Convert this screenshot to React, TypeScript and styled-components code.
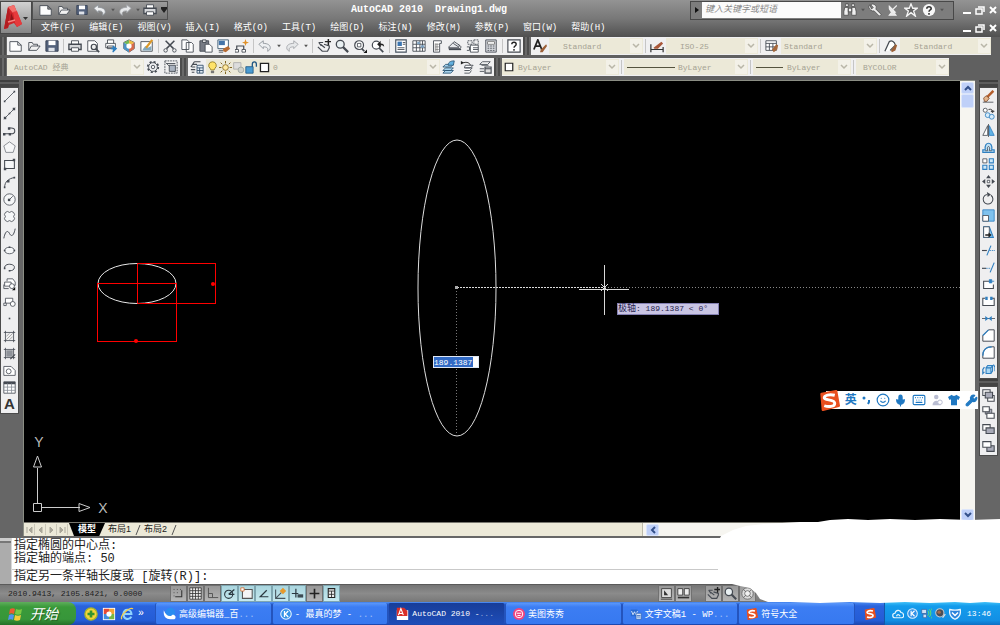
import React from 'react';
import styled, { createGlobalStyle } from 'styled-components';
import { Wrench, Mic, Keyboard, Smile } from 'lucide-react';

const mono = `"Liberation Mono", "Noto Sans CJK SC", monospace`;
const sans = `"Liberation Sans", "Noto Sans CJK SC", sans-serif`;

const Global = createGlobalStyle`
  * { box-sizing: border-box; }
  body { margin: 0; background: #666; font-family: ${mono}; font-size: 9px; }
  button, input, select { font: inherit; color: inherit; border: 0; margin: 0; padding: 0; background: none; border-radius: 0; outline: 0; }
  svg { display: block; flex: none; }
`;

/* ---------- icons ---------- */

const D = '#454a52';
const B = '#2f7fc0';

const icons: Record<string, React.ReactNode> = {
  file: <path d="M1 3h9l4 4v7H1z M10 3v4h4" fill="#fdfdfd" stroke={D} />,
  open: <path d="M2 13V4h4l1 2h5v2 M2 13l3-5h10l-4 5z" fill="#f2f2f2" stroke={D} />,
  save: <><path d="M1 2h14v12H1z" fill="#54627c" stroke="#333d50" /><path d="M4 2h8v5H4z" fill="#fff" /><path d="M4 10h7v4H4z" fill="#dfe3ea" /></>,
  print: <><path d="M4 6V2h8v4" fill="#fff" stroke={D} /><path d="M1 6h14v6H1z" fill="#d5d7da" stroke={D} strokeWidth="1.5" /><path d="M4 10h8v4H4z" fill="#fff" stroke={D} /></>,
  preview: <><path d="M2 2h8l3 3v9H2z" fill="#fff" stroke={D} /><circle cx="9" cy="9" r="3" fill="#eee" stroke={D} strokeWidth="1.4" /><path d="M11 11l4 4" stroke={D} strokeWidth="2" /></>,
  publish: <><path d="M4 5V1h7v4M2 5h11v5H2zM4 8h7v3H4z" fill="#fff" stroke={D} /><path d="M8 11h5M10 8l4 3-4 4" fill={B} stroke={B} strokeWidth="1.5" /></>,
  dwf: <><path d="M8 1l6 3v7l-6 4-6-4V4z" fill="#fff" stroke={D} /><path d="M8 1L2 4l6 4z" fill="#73b955" /><path d="M8 1l6 3-6 4z" fill="#eebc45" /><path d="M2 4l6 4v7l-6-4z" fill="#4b93c7" /><path d="M14 4L8 8v7l6-4z" fill="#d66a4d" /><circle cx="8" cy="8" r="3" fill="#fff" /></>,
  markup: <><path d="M1 3h13v11H1z" fill="#fff" stroke={D} /><path d="M3 12l3-4 3 2 4-2v5H3z" fill="#84a9bd" /><path d="M7 10l7-9" stroke="#db9829" strokeWidth="2.5" /></>,
  cut: <><path d="M3 2l9 9M13 2l-9 9" stroke={D} strokeWidth="1.7" /><circle cx="3" cy="13" r="2" stroke={D} fill="none" /><circle cx="13" cy="13" r="2" stroke={D} fill="none" /></>,
  copy: <path d="M1 1h6l2 2v9H1z M6 4h6l2 2v9H6z" fill="#fff" stroke={D} />,
  paste: <><path d="M1 2h10v12H1z" fill="#777b84" stroke={D} /><path d="M4 1h4v3H4z" fill="#ddd" stroke={D} /><path d="M7 6h5l3 3v6H7z" fill="#fff" stroke={D} /></>,
  match: <><path d="M1 1h12v10H1z" fill="#fff" stroke="#36566e" /><path d="M2 2h7v5H2z" fill="#4474a8" /><path d="M2 13h5M2 15h5" stroke={D} /><path d="M7 11l6-3 2 3-5 4-3-1z" fill="#b66a32" /></>,
  block: <><path d="M2 13V8h8v4" fill="none" stroke={D} strokeWidth="1.4" /><path d="M0 12h4v3H0zM8 12h4v3H8z" fill="#fff" stroke={D} /><path d="M12 0l1 3 3 1-3 1-1 3-1-3-3-1 3-1z" fill="#e0912a" /></>,
  undo: <path d="M1 6l5-4v3c5 0 8 2 8 5 0 2-1 3-3 4 1-4-1-5-5-5v2z" fill="#eef0f2" stroke="#8d9299" />,
  redo: <path d="M15 6l-5-4v3c-5 0-8 2-8 5 0 2 1 3 3 4-1-4 1-5 5-5v2z" fill="#e6e8ea" stroke="#a2a5a9" />,
  pan: <><path d="M2 4h5M2 4l3 4M1 9l5 5h6l2-4V8L8 6M4 6l5 4" fill="none" stroke={D} strokeWidth="1.4" /><path d="M13 0v7M9 3h7" stroke="#222" strokeWidth="1.7" /></>,
  zoom: <><circle cx="6" cy="6" r="4.500" fill="#e9f0f2" stroke={D} strokeWidth="1.5" /><path d="M9 9l6 6" stroke={D} strokeWidth="2.500" /></>,
  zoomwin: <><circle cx="7" cy="7" r="5" fill="#fff" stroke={D} strokeWidth="1.4" /><path d="M5 5h4v4H5z" fill="none" stroke={D} /><path d="M10 11l3 3" stroke={D} strokeWidth="2" /><path d="M16 12v4h-4z" fill="#111" /></>,
  zoomprev: <><circle cx="6" cy="7" r="4.500" fill="#fff" stroke={D} strokeWidth="1.4" /><path d="M9 10l5 5" stroke={D} strokeWidth="2" /><path d="M7 6l4-4v3c3 0 4 1 4 4-1-2-2-2-4-2v3z" fill="#222" /></>,
  props: <><path d="M2 1h12v14H2z" fill="#fff" stroke="#46525f" strokeWidth="1.3" /><path d="M4 3h5v5H4z" fill="#3c75b0" /><path d="M10 4h3M10 6h3M4 10h8M4 12h8" stroke={D} /></>,
  center: <><path d="M1 2h14v12H1z" fill="#fff" stroke={D} /><path d="M5 2v12M1 6h14M1 10h14M9 2v12M12 2v12" stroke={D} /><path d="M6 3h3v3H6zM10 7h4v3h-4z" fill="#7fa3c2" /></>,
  palette: <><path d="M4 2h9v3h-2v10H4z" fill="#fff" stroke={D} /><path d="M6 5v9M6 6h4M6 9h4M6 12h4M8 5v9" stroke="#888" /></>,
  sheet: <><path d="M1 9l6-6 6 4-1 3H2z" fill="#e7e9ec" stroke={D} /><path d="M1 9v2h13l1-2-3-3M6 5l6 4" fill="none" stroke={D} /><path d="M1 12h14" stroke={D} strokeWidth="1.5" /></>,
  markset: <><path d="M2 2h5v4H2zM9 1h5v5H9z" fill="none" stroke={D} strokeDasharray="2 1" /><path d="M5 7h9v8H5zM8 10h6M8 12h6" fill="#fff" stroke={D} /><path d="M1 9h3v4H1" fill="none" stroke={D} /></>,
  calc: <><path d="M2 1h12v14H2z" fill="#d9dbe0" stroke={D} /><path d="M4 3h8v3H4z" fill="#fff" stroke="#777" /><path d="M4 8h8M4 10.500h8M4 13h8" stroke={D} strokeDasharray="2 1" /></>,
  help: <><path d="M1 1h14v14H1z" fill="#fff" stroke={D} strokeWidth="1.3" /><path d="M5.500 6c0-3 5-3 5 0 0 2-2.500 2-2.500 4M8 11.500v2" fill="none" stroke="#222" strokeWidth="1.6" /></>,
  textstyle: <><path d="M1 12L5.500 1 10 12M3 8h6" fill="none" stroke="#222" strokeWidth="2" /><path d="M9 12l6-6 1 2-5 7H8z" fill="#9c6039" /></>,
  dimstyle: <><path d="M1 6v9M15 9v6M1 12h14" stroke="#333" strokeWidth="1.4" /><path d="M4 10l9-7 2 2-6 6H5z" fill="#a9583a" /></>,
  tabstyle: <><path d="M1 2h12v11H1zM1 5h12M5 5v8M9 5v8M1 9h12" fill="#fff" stroke={D} /><path d="M8 12l5-6 2 1-1 5-4 3z" fill="#a6683b" /></>,
  leaderstyle: <><path d="M1 14L6 3c3-2 6 0 7 4l-6 6" fill="#fff" stroke={D} strokeWidth="1.4" /><path d="M8 13l5-7 2 1-2 6-4 2z" fill="#9c6039" /></>,
  gear: <><circle cx="8" cy="8" r="6" fill="none" stroke={D} strokeWidth="2" strokeDasharray="2.400 2.300" /><circle cx="8" cy="8" r="5" fill="#f1f2f4" stroke={D} /><circle cx="8" cy="8" r="2" fill="none" stroke={D} /></>,
  workspace: <><path d="M1 1h14v14H1z" fill="none" stroke={D} strokeDasharray="2 1" /><path d="M3 4h10M2 3l11 11" stroke={D} /><path d="M6 6h7v7H6z" fill="#aab3c1" stroke={D} /></>,
  layers: <><path d="M5 2h7M3 5h5M2 8h4M1 11h5M5 2L1 8M5 14H2" stroke={D} strokeWidth="1.3" fill="none" /><path d="M8 6h7v9H8zM8 9h7M11 9v6M8 12h7" fill="#e3ecf5" stroke="#35506b" /></>,
  bulb: <><path d="M8 1a4.500 4.500 0 0 1 3 8l-1 2H6L5 9a4.500 4.500 0 0 1 3-8z" fill="#ffe36a" stroke="#8b7420" /><path d="M6 12h4v3H6z" fill="#777" /></>,
  sun: <><circle cx="8" cy="8" r="3.500" fill="#ffe9a0" stroke="#81631d" /><path d="M8 0v3M8 13v3M0 8h3M13 8h3M2 2l2 2M12 12l2 2M14 2l-2 2M4 12l-2 2" stroke="#81631d" strokeWidth="1.2" /></>,
  freeze: <><path d="M2 2h9v8H2z" fill="#ddd" stroke="#aaa" /><circle cx="11" cy="11" r="3.500" fill="#cfd1ca" stroke="#9ba29d" /></>,
  lock: <><path d="M1 7h9v8H1z" fill="#4a9bd1" stroke="#1f5683" /><path d="M9 7V4c0-4 5-4 5 0v3" fill="none" stroke="#1f5683" strokeWidth="1.6" /></>,
  square: <path d="M3 3h10v10H3z" fill="#fff" stroke="#222" strokeWidth="1.600" />,
  laycur: <><path d="M4 5h9l-3 3H1zM4 9h9l-3 3H1zM4 12h9l-3 3H1z" fill="#a9d3ee" stroke="#2e5878" /><path d="M7 6c0-3 2-5 7-5l-1 5z" fill="#62b0df" stroke="#2e5878" /></>,
  layprev: <><path d="M6 6h9l-3 3H5zM6 9h8l-3 3H5M13 12l-2 3H5" fill="#fff" stroke={D} /><path d="M4 3c4-1 7 0 8 3" fill="none" stroke="#222" /><path d="M1 1v4l4-2z" fill="#222" /></>,
  laystate: <><path d="M5 2h9l-3 3H2zM4 6h8M2 10h5M2 13h5" fill="#fff" stroke={D} /><path d="M8 8h7v7H8zM8 10h7" fill="#ddd" stroke={D} strokeWidth="1.300" /></>,
  line: <><path d="M2 14L14 2" stroke={D} /><path d="M1 13h2v2H1zM13 1h2v2h-2z" fill={D} /></>,
  xline: <><path d="M1 15L15 1" stroke={D} /><path d="M1 12h3v3H1zM12 1h3v3h-3zM7 7h2v2H7z" fill={D} /></>,
  pline: <><path d="M1 12h9c6 0 6-7 0-7H8" fill="none" stroke={D} strokeWidth="1.300" /><path d="M0 11h3v3H0zM7 11h3v3H7zM6 4h3v3H6z" fill={D} /></>,
  polygon: <path d="M8 1l7 5-2.500 8h-9L1 6z" fill="#f6f7f8" stroke="#777b82" />,
  rect: <><path d="M2 3h12v10H2z" fill="#f6f7f8" stroke={D} strokeWidth="1.300" /><path d="M1 12h3v3H1zM12 1h3v3h-3z" fill={D} /></>,
  arc: <><path d="M2 14C2 7 7 3 14 2" fill="none" stroke={D} strokeWidth="1.200" /><path d="M1 13h2v2H1zM5 5h3v3H5zM13 1h2v2h-2z" fill={D} /></>,
  circle: <><circle cx="8" cy="8" r="7" fill="#f6f7f8" stroke={D} /><path d="M8 8l4-4" stroke={D} /><path d="M6 7h3v3H6z" fill={D} /></>,
  cloud: <path d="M3 8a3 3 0 1 1 5-5 3.500 3.500 0 1 1 5 5 3.500 3.500 0 1 1-5 5 3.500 3.500 0 1 1-5-5z" fill="#f6f7f8" stroke={D} />,
  spline: <path d="M1 14C3 4 6 4 8 8s5 4 7-6" fill="none" stroke={D} strokeWidth="1.200" />,
  ellipse: <><ellipse cx="8" cy="8" rx="6" ry="4" fill="#f6f7f8" stroke={D} /><path d="M1 7h2v2H1zM13 7h2v2h-2zM7 3h2v2H7z" fill={D} /></>,
  ellarc: <><path d="M2 9C1 2 15 3 14 8c0 3-3 4-6 4" fill="none" stroke={D} strokeWidth="1.200" /><path d="M1 8h2v2H1zM7 11h2v2H7z" fill={D} /></>,
  insblk: <><path d="M5 4V1h7l3 4v4h-3M2 5h8v5H2z" fill="#fff" stroke={D} /><circle cx="11" cy="10" r="3" fill="#fff" stroke={D} /><path d="M1 8v5h6" fill="none" stroke={D} /><path d="M15 11v4h-4z" fill="#111" /></>,
  mkblk: <><path d="M3 4h9v6H3z" fill="#fff" stroke={D} /><path d="M1 10h3v3H1z" fill="#fff" stroke={D} /><circle cx="12" cy="11" r="3" fill="#fff" stroke={D} /></>,
  point: <path d="M7 7h2v2H7z" fill={D} />,
  hatch: <><path d="M3 1v14M13 1v14M1 3h14M1 13h14" stroke={D} /><path d="M4 8l4-4M4 12l8-8M8 12l4-4" stroke="#999" /></>,
  gradient: <><path d="M3 1v14M13 1v14M1 3h14M1 13h14" stroke={D} /><path d="M4 4h8v8H4z" fill="#8e9299" /><path d="M9 15l6-6" stroke={D} strokeWidth="1.400" /></>,
  region: <><path d="M1 3h9l5 5v6H1z" fill="#fff" stroke={D} /><circle cx="7" cy="9" r="3" fill="none" stroke={D} /></>,
  table: <><path d="M1 1h14v14H1z" fill="#fff" stroke={D} /><path d="M1 2.500h14" stroke={D} strokeWidth="3" /><path d="M5.500 3v12M10.500 3v12M1 7.500h14M1 11.500h14" stroke="#8a8f97" /></>,
  erase: <><path d="M6 9l8-8" stroke="#b35d2b" strokeWidth="3" /><path d="M2 10l3-3 4 3-3 4H3z" fill="#e5b58c" stroke="#7c4a2b" /><path d="M1 15h13" stroke={D} /></>,
  copyobj: <><circle cx="4" cy="4" r="2.500" fill="#fff" stroke={D} /><path d="M8 3c4-1 5 1 5 3M11 5h4l-2 2z" fill="none" stroke="#222" /><circle cx="7" cy="10" r="3" fill="#d7ecfa" stroke={B} /><circle cx="12" cy="12" r="3" fill="#d7ecfa" stroke={B} /></>,
  mirror: <><path d="M7 2v12H1z" fill="#fff" stroke={D} /><path d="M9 2v12h6z" fill="#62b4e6" stroke={B} /><path d="M8 0v16" stroke={D} /></>,
  offset: <><path d="M1 14v-3h3C2 0 14 0 12 11h3v3z" fill="#bfe0f5" stroke={B} strokeWidth="1.400" /><path d="M4 12h3C5 5 11 5 9 12h3" fill="none" stroke={D} /></>,
  array: <><path d="M1 1h5v5H1z" fill="#fff" stroke={D} /><path d="M9 1h5v5H9zM1 9h5v5H1zM9 9h5v5H9z" fill="#cde8f9" stroke={B} strokeWidth="1.300" /></>,
  move: <><path d="M8 0l3 4H5zM8 16l3-4H5zM0 8l4-3v6zM16 8l-4-3v6z" fill={D} /><path d="M6.500 6.500h3v3h-3z" fill="#fff" stroke={D} /></>,
  rotate: <><path d="M6 3a6 6 0 1 0 5 1" fill="none" stroke={D} strokeWidth="1.300" /><path d="M6 0l5 3-4 3z" fill={D} /></>,
  scale: <><path d="M1 1h14v14H1z" fill="#7fc2ee" stroke={B} /><path d="M1 8h7v7H1z" fill="#fff" stroke={D} /></>,
  stretch: <><path d="M2 1h7l5 13H2z" fill="#8fcdf3" stroke={B} strokeWidth="1.300" /><path d="M2 1h7v13H2z" fill="#fff" stroke={D} /><path d="M4 10h4V8l4 3-4 3v-2H4z" fill="#222" /></>,
  trim: <><path d="M6 14L11 2" stroke={B} strokeWidth="1.400" /><path d="M0 8h6" stroke={D} strokeWidth="1.400" /><path d="M9 8h7" stroke={B} strokeDasharray="2 1" /></>,
  extend: <><path d="M10 14l5-12" stroke={B} strokeWidth="1.400" /><path d="M0 9h5" stroke={D} strokeWidth="1.400" /><path d="M5 9h6" stroke={B} strokeDasharray="2 1" /></>,
  breakpt: <><path d="M10 4H2v9h12V8" fill="#fff" stroke={D} strokeWidth="1.300" /><path d="M9 2h3v4H9zM12 4h3" fill={B} stroke={B} /></>,
  breakseg: <><path d="M4 4H1v9h14V4h-3" fill="#fff" stroke={D} strokeWidth="1.300" /><path d="M4 2h3v4H4zM10 2h3v4h-3z" fill={B} /></>,
  join: <><path d="M0 8h16" stroke={D} /><path d="M4 5l4 3-4 3zM12 5L8 8l4 3z" fill={B} /></>,
  chamfer: <><path d="M1 15V8l7-7h7v14z" fill="#fff" stroke={D} strokeWidth="1.200" /><path d="M1 8l7-7" stroke={B} strokeWidth="1.500" /></>,
  fillet: <><path d="M1 15V12C1 5 5 1 12 1h3v14z" fill="#fff" stroke={D} strokeWidth="1.200" /><path d="M1 12C1 5 5 1 12 1" fill="none" stroke={B} strokeWidth="1.500" /></>,
  explode: <><path d="M5 6h6v7H5zM5 6l2-3h6l-2 3M13 3v7l-2 3" fill="#a9d7f5" stroke={B} strokeWidth="1.300" /><path d="M3 5L1 8v5l2-2M14 2l2 3v5" fill="none" stroke={B} strokeWidth="1.500" /></>,
  order1: <><path d="M1 1h9v7H1zM7 8h8v7H7z" fill="#fff" stroke={D} strokeWidth="1.300" /><path d="M4 4h9v7H4z" fill="#a9abb8" stroke={D} strokeWidth="1.300" /></>,
  order2: <><path d="M4 4h8v6H4z" fill="#a9abb8" stroke={D} /><path d="M1 1h8v6H1zM6 9h9v6H6z" fill="#fff" stroke={D} strokeWidth="1.300" /></>,
  order3: <><path d="M1 2h9v7H1z" fill="#fff" stroke={D} strokeWidth="1.300" /><path d="M5 6h10v7H5z" fill="#a9abb8" stroke={D} strokeWidth="1.300" /></>,
  order4: <><path d="M6 7h9v7H6z" fill="#a9abb8" stroke={D} strokeWidth="1.300" /><path d="M1 2h10v7H1z" fill="#fff" stroke={D} strokeWidth="1.300" /></>,
  snap: <><path d="M4 12h8V4" fill="none" stroke="#333" strokeWidth="1.300" /><path d="M2 3h1M6 3h1M10 3h1M2 7h1M6 7h1M2 11h1" stroke="#333" /></>,
  grid: <path d="M1 1h14v14H1zM4.500 1v14M8 1v14M11.500 1v14M1 4.500h14M1 8h14M1 11.500h14" fill="#ececec" stroke="#333" />,
  ortho: <path d="M3 1v12h12M3 8h5v5" fill="none" stroke="#555" strokeWidth="1.200" />,
  polar: <><circle cx="7" cy="9" r="5" fill="none" stroke="#2b3840" strokeWidth="1.300" /><path d="M7 9h7M7 9l7-6" stroke="#2b3840" strokeWidth="1.500" /></>,
  osnap: <><path d="M3 3h12v11H3z" fill="#f4f4f4" stroke="#555" strokeWidth="1.300" /><path d="M1 1h4v4H1z" fill="#fff" stroke="#d06c30" /></>,
  otrack: <path d="M12 4L4 12h10" fill="none" stroke="#2b3840" strokeWidth="1.500" />,
  ducs: <><path d="M2 3v11h12M2 14l7-7" fill="none" stroke="#46555d" strokeWidth="1.300" /><path d="M11 1l4 4-4 4-4-4z" fill="#e79a2c" /></>,
  dyn: <><path d="M6 2v11M1 8h8" stroke="#2b3840" strokeWidth="1.500" /><path d="M8 9h7v4H8z" fill="#3c4b53" /></>,
  lwt: <path d="M8 2v12M2 8h12" stroke="#222" strokeWidth="2" />,
  qp: <><path d="M4 2h8v11H4z" fill="#eee" stroke="#222" strokeWidth="1.300" /><path d="M4 5h8M8 5v8M5 9h6" stroke="#222" /></>,
  model: <><path d="M2 2h12v11H2z" fill="#ddd" stroke="#333" /><path d="M5 4v6h5z" fill="#333" /><path d="M1 15h14" stroke="#333" /></>,
  quick: <><path d="M1 2h6v8H1zM9 2h6v8H9z" fill="#eee" stroke="#333" /><path d="M1 13h14" stroke="#333" strokeWidth="2" /></>,
  wheel: <><circle cx="8" cy="8" r="7" fill="#ddd" stroke="#666" /><circle cx="8" cy="8" r="3.500" fill="#f2f2f2" stroke="#666" /><path d="M3 3l3 3M10 10l3 3M13 3l-3 3M6 10l-3 3" stroke="#666" /></>,
  binoc: <path d="M2 5h4v9H1v-4zM10 5h4l1 5v4h-5zM6 6h4v4H6zM3 1h3v3H3zM10 1h3v3h-3z" fill="#f0f0f0" stroke="#444" strokeWidth="0.800" />,
  key: <path d="M2 2a4 4 0 0 0 1 6 4 4 0 0 0 4 1l6 6 2-2-6-6a4 4 0 0 0-6-5l3 3-2 2z" fill="#efefef" stroke="#444" strokeWidth="0.800" />,
  dish: <path d="M3 3c-1 6 4 9 8 8zM8 7l5-5M6 11l-3 4h9l-3-4" fill="#e8e8e8" stroke="#efefef" strokeWidth="1.500" />,
  star: <path d="M8 1l2 5h5l-4 3 2 6-5-4-5 4 2-6-4-3h5z" fill="#666" stroke="#f5f5f5" strokeWidth="1.500" />,
  helpround: <><circle cx="8" cy="8" r="7" fill="#f8f8f8" /><path d="M5.500 6.500c0-3 5-3 5 0 0 1.500-2.500 1.500-2.500 3.500M8 11.500v2" fill="none" stroke="#333" strokeWidth="1.800" /></>,
  caret: <path d="M5 6h6l-3 4z" fill="#555" />,
  sogou: <><path d="M2 3L13 1l2 11-12 3z" fill="#e94f1f" stroke="#e94f1f" strokeWidth="2" strokeLinejoin="round" /><path d="M12 4C8 3 4 4 4 6s8 1 8 4-5 3-8 2" fill="none" stroke="#fff" strokeWidth="2.200" /></>,
  k: <><circle cx="8" cy="8" r="7" fill="#3292e8" stroke="#e3f2ff" strokeWidth="1.500" /><path d="M6 4v8M11 4L7 8l4 4" fill="none" stroke="#fff" strokeWidth="1.700" /></>,
  cloudapp: <><circle cx="9" cy="7" r="6" fill="#2a8cf0" /><path d="M1 4c-1 8 3 11 8 11h5c2-1 2-4 0-5-2-1-3 0-4 1-4 1-7-2-9-7z" fill="#fff" /></>,
  cad: <><path d="M1 4h14v12H1z" fill="#fff" /><path d="M1 1h9l4 4v6H1z" fill="#d9302a" /><path d="M3 10l3-8 3 8M4 8h4" fill="none" stroke="#fff" strokeWidth="1.400" /></>,
  meitu: <><circle cx="8" cy="8" r="8" fill="#f0437e" /><circle cx="8" cy="8" r="5" fill="none" stroke="#fff" strokeWidth="1.300" /><path d="M5 7h6M6 10h4" stroke="#fff" strokeWidth="1.300" /></>,
  wps: <><path d="M1 2h9v9H1z" fill="#2a6bd1" /><path d="M2 4l2 5 2-4 2 4 2-5" fill="none" stroke="#fff" /><path d="M8 7h7v8H8z" fill="#dbe9fb" stroke="#2d62b5" /><path d="M9 10h5M9 12h5" stroke="#2d62b5" /></>,
  guard: <><circle cx="8" cy="8" r="7" fill="#f5d43a" stroke="#a8b52a" strokeWidth="1.500" /><path d="M8 4v8M4 8h8" stroke="#34952f" strokeWidth="3" /></>,
  blocks: <><path d="M1 1h14v14H1z" fill="#fff" /><path d="M2 2h6v6H2z" fill="#e54a36" /><path d="M8 2h6v6H8z" fill="#f3a534" /><path d="M2 8h6v6H2z" fill="#418de0" /><path d="M8 8h6v6H8z" fill="#77b943" /><circle cx="8" cy="8" r="3" fill="#fff" /></>,
  ie: <><path d="M13 11c-2 4-9 4-9-3s9-6 9 0H5" fill="none" stroke="#8ed3ff" strokeWidth="2.500" /><path d="M2 14C0 10 10 0 15 2" fill="none" stroke="#f6cf4b" strokeWidth="1.500" /></>,
  traycloud: <path d="M4 13a3 3 0 0 1 0-6c1-5 7-5 8-1 4 0 5 7 1 7zM6 11c1-3 3-3 5 0" fill="none" stroke="#e8f7ff" strokeWidth="1.600" />,
  net: <><path d="M1 2h7v6H1zM3 9h5v5H3z" fill="#cfe0f5" stroke="#35609f" /><path d="M10 4c2 2 2 5 0 7M12 2c3 3 3 8 0 11M15 1c3 4 3 10 0 14" fill="none" stroke="#73ee4e" strokeWidth="1.300" /></>,
  speaker: <><circle cx="7" cy="7" r="6" fill="#4a4f58" stroke="#c3c7cd" strokeWidth="1.500" /><circle cx="6" cy="6" r="2.500" fill="#a56b4b" /><path d="M11 14l4-5" stroke="#ddd" strokeWidth="2" /></>,
  shield: <><path d="M1 2c5 1 9 1 14 0 1 6-2 11-7 13C3 13 0 8 1 2z" fill="#2b83dc" stroke="#e9f6ff" strokeWidth="1.700" /><path d="M4 6l4 4 4-4" fill="none" stroke="#fff" strokeWidth="2" /></>,
  person: <><circle cx="7" cy="4" r="3" fill="#b9bdd2" /><path d="M2 15c0-8 10-8 11 0z" fill="#b9bdd2" /><circle cx="12" cy="11" r="3" fill="#fff" stroke="#b9bdd2" strokeWidth="1.300" /></>,
  shirt: <path d="M5 1c1 2 5 2 6 0l5 3-2 4-2-1v8H4V7L2 8 0 4z" fill="#1f78c2" />,
  winflag: <><path d="M2 3c2-1 4-1 5 0L6 8c-2-1-3-1-5 0z" fill="#ec5a31" /><path d="M8 3c2 1 4 1 6 0l-1 5c-2 1-4 1-6 0z" fill="#7cc843" /><path d="M1 9c2-1 3-1 5 0l-1 5c-1-1-3-1-5 0z" fill="#5293ee" /><path d="M7 9c2 1 4 1 6 0l-1 5c-2 1-4 1-6 0z" fill="#f6cb3a" /></>,
};

const Icon = ({ name, size = 14 }: { name: string; size?: number }) => (
  <svg width={size} height={size} viewBox="0 0 16 16" fill="none" aria-hidden="true">{icons[name]}</svg>
);

/* ---------- frame ---------- */

const Shell = styled.div`
  position: relative;
  min-height: 100vh;
  display: flex;
  flex-direction: column;
  overflow: hidden;
  background: #666;
`;

const Header = styled.header`
  height: 37px;
  display: flex;
  background: linear-gradient(#939393, #787878 50%, #505050);
  color: #fff;
`;
const AppButton = styled.button`
  width: 32px;
  height: 33px;
  margin: 1px 0 0 0;
  display: flex;
  align-items: center;
  justify-content: center;
  border: 1px solid #484848;
  background: linear-gradient(#d2d2d2, #858585);
`;
const HeaderRows = styled.div`
  flex: 1;
  min-width: 0;
`;
const TitleRow = styled.div`
  height: 20px;
  display: flex;
  align-items: center;
`;
const QuickBar = styled.div`
  width: 136px;
  height: 19px;
  padding-left: 4px;
  display: flex;
  align-items: center;
  border: 1px solid #505050;
  background: linear-gradient(#9c9c9c, #757575);
`;
const Title = styled.h1`
  flex: 1;
  margin: 0;
  text-align: center;
  white-space: pre;
  font-size: 10px;
  font-weight: 700;
  line-height: 20px;
`;
const Tool = styled.button<{ $w?: number }>`
  width: ${(p) => p.$w ?? 18}px;
  height: 18px;
  flex: none;
  display: flex;
  align-items: center;
  justify-content: center;
`;
const Search = styled.div`
  width: 264px;
  height: 19px;
  display: flex;
  align-items: center;
  border: 1px solid #484848;
  background: #7d7d7d;
`;
const SearchInput = styled.input`
  width: 139px;
  height: 16px;
  padding-left: 3px;
  background: #fbfbfb;
  font-size: 9px;
  font-style: italic;
  &::placeholder { color: #888; opacity: 1; }
`;
const Controls = styled.div`
  width: 46px;
  padding-left: 6px;
  display: flex;
  align-items: center;
`;
const Control = styled.button`
  width: 13px;
  height: 14px;
  display: flex;
  align-items: center;
  justify-content: center;
`;
const MenuRow = styled.nav`
  height: 16px;
  padding-left: 9px;
  display: flex;
  align-items: center;
`;
const MenuList = styled.div`
  flex: 1;
  display: flex;
  gap: 14px;
`;
const MenuItem = styled.button`
  line-height: 16px;
  font-size: 9px;
  white-space: nowrap;
`;

/* ---------- toolbars ---------- */

const Toolbars = styled.div`
  display: flex;
  flex-direction: column;
  gap: 3px;
  padding-bottom: 4px;
  background: #606060;
`;
const BarRow = styled.div`
  height: 18px;
  display: flex;
`;
const Grip = styled.span<{ $w?: number }>`
  width: ${(p) => p.$w ?? 8}px;
  flex: none;
  background: repeating-linear-gradient(90deg, #4c4c4c 0 2px, #696969 2px 4px);
`;
const BarGroup = styled.div`
  display: flex;
  align-items: center;
  background: #f0f0f1;
`;
const Sep = styled.span`
  width: 5px;
  height: 14px;
  flex: none;
  background: linear-gradient(90deg, transparent 2px, #c5c5c5 2px 3px, transparent 3px);
`;
const DropBox = styled.div<{ $w: number }>`
  width: ${(p) => p.$w}px;
  height: 16px;
  display: flex;
  align-items: center;
  background: #ece9d8;
`;
const DropSelect = styled.select<{ $pad: number }>`
  flex: 1;
  min-width: 0;
  height: 16px;
  padding-left: ${(p) => p.$pad}px;
  appearance: none;
  color: #a5a293;
  font-size: 8px;
`;
const Chevron = styled.span`
  width: 12px;
  height: 14px;
  margin-right: 1px;
  display: flex;
  align-items: center;
  justify-content: center;
  background: #f3f1e8;
`;
const Stroke = styled.span<{ $w: number }>`
  width: ${(p) => p.$w}px;
  height: 1px;
  margin-left: 3px;
  background: #55533e;
`;

const Drop = ({ w, pad = 14, value, label, lead }: { w: number; pad?: number; value: string; label: string; lead?: React.ReactNode }) => (
  <DropBox $w={w}>
    {lead}
    <DropSelect $pad={pad} aria-label={label} defaultValue={value}><option>{value}</option></DropSelect>
    <Chevron><svg width="8" height="6" viewBox="0 0 8 6"><path d="M1 1l3 3 3-3" fill="none" stroke="#b9b6a8" strokeWidth="1.500" /></svg></Chevron>
  </DropBox>
);

const Tools = ({ names }: { names: string[] }) => (
  <>{names.map((n) => <Tool key={n} aria-label={n}><Icon name={n} /></Tool>)}</>
);

/* ---------- work area ---------- */

const Work = styled.main`
  position: relative;
  flex: 1;
  min-height: 420px;
  display: flex;
`;
const Dock = styled.aside<{ $side: 'left' | 'right' }>`
  width: ${(p) => (p.$side === 'left' ? 23 : 25)}px;
  padding: ${(p) => (p.$side === 'left' ? '0 4px 0 0' : '0 2px 0 4px')};
  flex: none;
`;
const DockHead = styled.div`
  height: 7px;
  background: linear-gradient(#3f3f3f 2px, #5d5d5d 2px 4px, #444 4px);
`;
const DockTools = styled.div<{ $h: number }>`
  height: ${(p) => p.$h}px;
  display: grid;
  grid-auto-rows: 1fr;
  justify-items: center;
  align-items: center;
  border: 1px solid #4b4b4b;
  background: #efeff0;
`;
const DockTool = styled.button`
  display: flex;
  font-family: ${sans};
  font-size: 15px;
  line-height: 16px;
  font-weight: 700;
  color: #333;
`;
const Center = styled.div`
  flex: 1;
  min-width: 0;
  display: flex;
  flex-direction: column;
  border-top: 1px solid #8b8e84;
  border-left: 1px solid #8b8e84;
`;
const CanvasRow = styled.div`
  flex: 1;
  display: flex;
`;
const Canvas = styled.div`
  position: relative;
  flex: 1;
  overflow: hidden;
  background: #000;
`;
const Drawing = styled.svg`
  position: absolute;
  inset: 0;
  width: 100%;
  height: 100%;
`;
const Ucs = styled.svg`
  position: absolute;
  left: 0;
  bottom: 0;
`;
const Tooltip = styled.div`
  position: absolute;
  left: 593px;
  top: 222px;
  width: 102px;
  height: 12px;
  border: 1px solid #8581b4;
  background: #c9c5e4;
  color: #26234c;
  font-size: 8px;
  line-height: 10px;
  white-space: pre;
`;
const TipWord = styled.span`
  font-size: 9px;
`;
const DynInput = styled.input`
  position: absolute;
  left: 409px;
  top: 275px;
  width: 46px;
  height: 12px;
  border: 1px solid #dfe8f5;
  background: linear-gradient(90deg, #316ac5 39px, #fff 39px);
  color: #fff;
  font-size: 8px;
`;
const ScrollCol = styled.div`
  width: 15px;
  padding: 1px;
  display: flex;
  flex-direction: column;
  background: #f6f5f0;
`;
const ScrollButton = styled.button<{ $h?: number }>`
  width: 13px;
  height: ${(p) => p.$h ?? 12}px;
  display: flex;
  align-items: center;
  justify-content: center;
  border: 1px solid #dbe5fb;
  border-radius: 2px;
  background: #bfd0f8;
`;
const Fill = styled.div`
  flex: 1;
`;
const TabRow = styled.div`
  height: 14px;
  display: flex;
  align-items: center;
  border-top: 1px solid #77766e;
  background: #ece9d8;
`;
const TabNav = styled.button`
  width: 11px;
  height: 11px;
  display: flex;
  align-items: center;
  justify-content: center;
  border-right: 1px solid #cbc8b9;
`;
const Tabs = styled.div`
  padding-left: 1px;
  display: flex;
`;
const TabButton = styled.button<{ $on?: boolean }>`
  width: 36px;
  height: 13px;
  background: ${(p) => (p.$on ? '#000' : 'transparent')};
  color: ${(p) => (p.$on ? '#fff' : '#222')};
  clip-path: ${(p) => (p.$on ? 'polygon(0 0, 100% 0, 84% 100%, 14% 100%)' : 'none')};
  font-family: ${sans};
  font-size: 9px;
  font-weight: ${(p) => (p.$on ? 700 : 400)};
  line-height: 13px;
  display: flex;
  align-items: center;
  justify-content: ${(p) => (p.$on ? 'center' : 'flex-end')};
  gap: 4px;
`;
const HScroll = styled.div`
  width: 333px;
  height: 13px;
  padding-left: 3px;
  display: flex;
  align-items: center;
  border-left: 1px solid #bdbaa9;
  background: #f6f5f0;
`;

/* ---------- input method bar ---------- */

const Ime = styled.div`
  position: absolute;
  right: 22px;
  top: 311px;
  width: 152px;
  height: 18px;
  display: flex;
  align-items: center;
  justify-content: space-between;
  background: #fff;
  color: #1f78c2;
`;
const ImeLogo = styled.span`
  margin-left: -7px;
`;
const ImeButton = styled.button`
  display: flex;
  font-family: ${sans};
  font-size: 12px;
  line-height: 16px;
  font-weight: 700;
`;

/* ---------- command window ---------- */

const Command = styled.section`
  height: 46px;
  margin-top: 2px;
  display: flex;
  background: #fff;
  color: #222;
  font-size: 12px;
`;
const CommandGrip = styled.div`
  width: 12px;
  flex: none;
  border-right: 1px solid #d8d8d8;
  background: linear-gradient(#ccc 3px, #777 3px 5px, #acacac 5px);
`;
const CommandBody = styled.div`
  flex: 1;
  min-width: 0;
`;
const History = styled.div`
  height: 32px;
  padding: 2px 0 0 2px;
  border-bottom: 1px solid #c9c9c9;
  line-height: 13px;
`;
const Prompt = styled.label`
  height: 14px;
  padding-left: 2px;
  display: flex;
  line-height: 15px;
  white-space: pre;
`;
const PromptInput = styled.input`
  flex: 1;
  height: 13px;
`;

/* ---------- status bar ---------- */

const Status = styled.footer`
  height: 18px;
  display: flex;
  align-items: center;
  border-top: 1px solid #5a5a5a;
  background: linear-gradient(#757575, #8b8b8b 50%, #777);
`;
const Coords = styled.span`
  width: 170px;
  padding-left: 8px;
  color: #1d1d1d;
  font-size: 8px;
  line-height: 17px;
`;
const StatusButton = styled.button<{ $on?: boolean }>`
  width: 17px;
  height: 17px;
  display: flex;
  align-items: center;
  justify-content: center;
  border: 1px solid ${(p) => (p.$on ? '#7fa6b0' : '#717171')};
  background: ${(p) => (p.$on ? 'linear-gradient(#a9d5de, #c6e9ef)' : 'linear-gradient(#989898, #b5b5b5)')};
`;
const StatusRight = styled.div`
  padding-right: 244px;
  display: flex;
`;
const StatusGap = styled.span`
  width: 13px;
`;

/* ---------- taskbar ---------- */

const Taskbar = styled.div`
  height: 23px;
  display: flex;
  color: #fff;
  background: linear-gradient(#4c8cf2, #2a63dc 4px, #245cd6 80%, #1c46ab);
`;
const Start = styled.button`
  width: 76px;
  padding-left: 8px;
  display: flex;
  align-items: center;
  gap: 6px;
  border-radius: 0 8px 8px 0;
  background: linear-gradient(#5fae5c, #3a9a3a 5px, #37963a 75%, #247028);
  font-family: ${sans};
  font-size: 14px;
  line-height: 20px;
  font-style: italic;
  text-shadow: 1px 1px 1px #1d5c20;
`;
const QuickLaunch = styled.div`
  width: 79px;
  padding-left: 8px;
  display: flex;
  align-items: center;
  gap: 4px;
  font-size: 10px;
`;
const Launch = styled.button`
  display: flex;
`;
const Task = styled.button<{ $on?: boolean; $small?: boolean }>`
  flex: 1;
  min-width: 0;
  height: 21px;
  margin-top: 1px;
  padding-left: 7px;
  display: flex;
  align-items: center;
  gap: 3px;
  overflow: hidden;
  white-space: pre;
  border-left: 1px solid #2454bd;
  border-right: 1px solid #2454bd;
  border-radius: 2px;
  font-size: ${(p) => (p.$small ? 8 : 9)}px;
  background: ${(p) => (p.$on ? 'linear-gradient(#173d99, #1e4db8)' : 'linear-gradient(#5b97fa, #3c7df3 4px, #3779f0)')};
`;
const Dim = styled.span`
  opacity: 0.5;
`;
const LangBar = styled.div`
  width: 29px;
  display: flex;
  align-items: center;
  justify-content: center;
`;
const Tray = styled.div`
  width: 116px;
  padding-left: 7px;
  display: flex;
  align-items: center;
  gap: 3px;
  border-left: 1px solid #1457a8;
  background: linear-gradient(#3fc0f8, #149cec 4px, #128fe4 80%, #0f6fc4);
`;
const Clock = styled.time`
  margin-left: 3px;
  font-size: 8px;
`;

const Torn = styled.svg`
  position: absolute;
  right: 0;
  bottom: 20px;
  pointer-events: none;
`;

const menus = ['文件(F)', '编辑(E)', '视图(V)', '插入(I)', '格式(O)', '工具(T)', '绘图(D)', '标注(N)', '修改(M)', '参数(P)', '窗口(W)', '帮助(H)'];
const drawTools = ['line', 'xline', 'pline', 'polygon', 'rect', 'arc', 'circle', 'cloud', 'spline', 'ellipse', 'ellarc', 'insblk', 'mkblk', 'point', 'hatch', 'gradient', 'region', 'table', 'A'];
const modifyTools = ['erase', 'copyobj', 'mirror', 'offset', 'array', 'move', 'rotate', 'scale', 'stretch', 'trim', 'extend', 'breakpt', 'breakseg', 'join', 'chamfer', 'fillet', 'explode'];
const orderTools = ['order1', 'order2', 'order3', 'order4'];
const toggles: [string, boolean][] = [['snap', false], ['grid', false], ['ortho', false], ['polar', true], ['osnap', true], ['otrack', true], ['ducs', true], ['dyn', true], ['lwt', false], ['qp', true]];
const navPaths = ['M2 1v6M7 1L4 4l3 3z', 'M6 1L3 4l3 3z', 'M3 1l3 3-3 3z', 'M2 1l3 3-3 3zM7 1v6'];

const WindowControls = () => (
  <Controls>
    <Control aria-label="最小化"><svg width="10" height="10"><path d="M1 8h8" stroke="#fff" strokeWidth="2" /></svg></Control>
    <Control aria-label="还原"><svg width="10" height="10"><path d="M3 2h6v5M1 4h6v5H1z" fill="none" stroke="#fff" strokeWidth="1.500" /></svg></Control>
    <Control aria-label="关闭"><svg width="10" height="10"><path d="M2 2l6 6M8 2L2 8" stroke="#fff" strokeWidth="2" /></svg></Control>
  </Controls>
);

const DockGroup = ({ names, h }: { names: string[]; h: number }) => (
  <>
    <DockHead />
    <DockTools $h={h}>
      {names.map((n) => <DockTool key={n} aria-label={n}>{n === 'A' ? 'A' : <Icon name={n} size={13} />}</DockTool>)}
    </DockTools>
  </>
);

export default function App() {
  return (
    <Shell>
      <Global />
      <Header>
        <AppButton aria-label="AutoCAD">
          <svg width="28" height="29" viewBox="0 0 28 29">
            <path d="M2 26L6 4l6-2 8 19-5 3-3-4-5 2-1 3z" fill="#cf2429" />
            <path d="M6 4l6-2 3 7-4 1z" fill="#f4706c" />
            <path d="M11 9l4-1 5 13-5 3-2-4z" fill="#e63a3c" />
            <path d="M9 10l3 7-4 2z" fill="#8e1519" />
            <path d="M2 26L6 4l2 7-2 14z" fill="#b21c21" />
            <path d="M6 19l7-2" stroke="#f58480" strokeWidth="1.500" />
            <path d="M21 14h5l-2.500 3z" fill="#333" />
          </svg>
        </AppButton>
        <HeaderRows>
          <TitleRow>
            <QuickBar>
              <Tool aria-label="新建"><Icon name="file" /></Tool>
              <Tool aria-label="打开"><Icon name="open" /></Tool>
              <Tool aria-label="保存"><Icon name="save" size={12} /></Tool>
              <Tool aria-label="放弃"><Icon name="undo" /></Tool>
              <Tool $w={7} aria-label="放弃列表"><Icon name="caret" size={10} /></Tool>
              <Tool aria-label="重做"><Icon name="redo" /></Tool>
              <Tool $w={7} aria-label="重做列表"><Icon name="caret" size={10} /></Tool>
              <Tool aria-label="打印"><Icon name="print" /></Tool>
              <Tool $w={10} aria-label="自定义"><svg width="8" height="8"><path d="M1 1h6v2L4 7 1 3z" fill="#222" /></svg></Tool>
            </QuickBar>
            <Title>{'AutoCAD 2010  Drawing1.dwg'}</Title>
            <Search>
              <Tool $w={11} aria-label="展开"><svg width="6" height="8"><path d="M1 1l4 3-4 3z" fill="#111" /></svg></Tool>
              <SearchInput aria-label="搜索" placeholder="键入关键字或短语" />
              <Tool aria-label="搜索"><Icon name="binoc" /></Tool>
              <Tool $w={7} aria-label="搜索选项"><Icon name="caret" size={10} /></Tool>
              <Tool aria-label="速博"><Icon name="key" /></Tool>
              <Tool aria-label="通讯中心"><Icon name="dish" size={12} /></Tool>
              <Tool aria-label="收藏夹"><Icon name="star" /></Tool>
              <Tool aria-label="帮助"><Icon name="helpround" /></Tool>
              <Tool $w={7} aria-label="帮助选项"><Icon name="caret" size={10} /></Tool>
            </Search>
            <WindowControls />
          </TitleRow>
          <MenuRow>
            <MenuList>{menus.map((m) => <MenuItem key={m}>{m}</MenuItem>)}</MenuList>
            <WindowControls />
          </MenuRow>
        </HeaderRows>
      </Header>

      <Toolbars>
        <BarRow>
          <Grip $w={7} />
          <BarGroup>
            <Tools names={['file', 'open', 'save']} /><Sep />
            <Tools names={['print', 'preview', 'publish', 'dwf', 'markup']} /><Sep />
            <Tools names={['cut', 'copy', 'paste', 'match', 'block']} /><Sep />
            <Tools names={['undo']} /><Tool $w={9} aria-label="放弃列表"><Icon name="caret" size={10} /></Tool>
            <Tools names={['redo']} /><Tool $w={9} aria-label="重做列表"><Icon name="caret" size={10} /></Tool><Sep />
            <Tools names={['pan', 'zoom', 'zoomwin', 'zoomprev']} /><Sep />
            <Tools names={['props', 'center', 'palette', 'sheet', 'markset', 'calc']} /><Sep />
            <Tools names={['help']} />
          </BarGroup>
          <Grip />
          <BarGroup>
            <Tools names={['textstyle']} />
            <Drop w={94} value="Standard" label="文字样式" /><Sep />
            <Tools names={['dimstyle']} />
            <Drop w={92} value="ISO-25" label="标注样式" /><Sep />
            <Tools names={['tabstyle']} />
            <Drop w={96} pad={3} value="Standard" label="表格样式" /><Sep />
            <Tools names={['leaderstyle']} />
            <Drop w={91} value="Standard" label="多重引线样式" />
          </BarGroup>
        </BarRow>
        <BarRow>
          <Grip $w={7} />
          <BarGroup>
            <Drop w={137} pad={7} value="AutoCAD 经典" label="工作空间" />
            <Tools names={['gear', 'workspace']} />
          </BarGroup>
          <Grip />
          <BarGroup>
            <Tools names={['layers']} />
            <Drop
              w={234}
              pad={2}
              value="0"
              label="图层"
              lead={['bulb', 'sun', 'freeze', 'lock', 'square'].map((n) => <Tool key={n} $w={13} aria-label={n}><Icon name={n} size={13} /></Tool>)}
            />
            <Tools names={['laycur', 'layprev', 'laystate']} />
          </BarGroup>
          <Grip />
          <BarGroup>
            <Drop w={117} pad={2} value="ByLayer" label="颜色" lead={<Tool $w={14} aria-label="色块"><Icon name="square" size={12} /></Tool>} /><Sep />
            <Drop w={124} pad={3} value="ByLayer" label="线型" lead={<Stroke $w={48} />} /><Sep />
            <Drop w={98} pad={4} value="ByLayer" label="线宽" lead={<Stroke $w={27} />} /><Sep />
            <Drop w={93} pad={7} value="BYCOLOR" label="打印样式" />
          </BarGroup>
        </BarRow>
      </Toolbars>

      <Work>
        <Dock $side="left"><DockGroup names={drawTools} h={327} /></Dock>
        <Center>
          <CanvasRow>
            <Canvas>
              <Drawing fill="none">
                <ellipse cx="113" cy="202.500" rx="39" ry="20" stroke="#e8e8e8" />
                <path d="M73.500 202.500h79M113.500 182.500v40M113.500 182.500h78M113.500 222.500h78M191.500 182v41M73.500 202v58M152.500 202v58M73 260.500h80" stroke="#f00" />
                <circle cx="189" cy="203" r="2" fill="#f00" />
                <circle cx="112" cy="260" r="2" fill="#f00" />
                <ellipse cx="433" cy="207" rx="39" ry="148" stroke="#dedede" />
                <path d="M433 206.500h148" stroke="#ddd" strokeDasharray="2 1" />
                <line x1="581" y1="206.500" x2="100%" y2="206.500" stroke="#888" strokeDasharray="1 2" />
                <path d="M432.500 207v147" stroke="#777" strokeDasharray="1 2" />
                <path d="M431 206.500h3" stroke="#aaa" strokeWidth="3" />
                <path d="M580.500 184v50M555 208.500h50M577 203l7 7M584 203l-7 7" stroke="#d8d8d8" />
              </Drawing>
              <Tooltip role="tooltip"><TipWord>极轴</TipWord>{': 189.1387 < 0°'}</Tooltip>
              <DynInput aria-label="半轴长度" defaultValue="189.1387" />
              <Ucs width="96" height="90" viewBox="0 0 96 90" fill="none" stroke="#ccc">
                <path d="M9.500 71.500h8v8h-8zM13.500 71V36M18 75.500h38M13.500 24l-4 11h8zM66 75.500l-11-4v8z" />
                <text x="15" y="15" textAnchor="middle" fontFamily="Liberation Sans, sans-serif" fontSize="14" fill="#bbb" stroke="none">Y</text>
                <text x="79" y="81" textAnchor="middle" fontFamily="Liberation Sans, sans-serif" fontSize="14" fill="#bbb" stroke="none">X</text>
              </Ucs>
            </Canvas>
            <ScrollCol>
              <ScrollButton aria-label="向上滚动"><svg width="8" height="6"><path d="M1 5l3-3 3 3" fill="none" stroke="#33508a" strokeWidth="2" /></svg></ScrollButton>
              <ScrollButton $h={14} aria-label="滚动块" />
              <Fill />
              <ScrollButton aria-label="向下滚动"><svg width="8" height="6"><path d="M1 1l3 3 3-3" fill="none" stroke="#33508a" strokeWidth="2" /></svg></ScrollButton>
            </ScrollCol>
          </CanvasRow>
          <TabRow>
            {navPaths.map((d) => <TabNav key={d} aria-label="切换布局"><svg width="9" height="8"><path d={d} fill="#aaa79a" stroke="#aaa79a" /></svg></TabNav>)}
            <Tabs>
              <TabButton $on>模型</TabButton>
              <TabButton>布局1<svg width="6" height="12"><path d="M5 1L1 11" stroke="#555" /></svg></TabButton>
              <TabButton>布局2<svg width="6" height="12"><path d="M5 1L1 11" stroke="#555" /></svg></TabButton>
            </Tabs>
            <Fill />
            <HScroll><ScrollButton aria-label="向左滚动"><svg width="6" height="8"><path d="M5 1L2 4l3 3" fill="none" stroke="#33508a" strokeWidth="2" /></svg></ScrollButton></HScroll>
          </TabRow>
        </Center>
        <Dock $side="right">
          <DockGroup names={modifyTools} h={292} />
          <DockGroup names={orderTools} h={70} />
        </Dock>
        <Ime>
          <ImeLogo><Icon name="sogou" size={21} /></ImeLogo>
          <ImeButton>英</ImeButton>
          <ImeButton aria-label="标点"><svg width="9" height="12"><circle cx="2" cy="4" r="1.500" fill="#1f78c2" /><path d="M7 6v2l-1 2" fill="none" stroke="#1f78c2" strokeWidth="2" /></svg></ImeButton>
          <ImeButton aria-label="表情"><Smile size={14} /></ImeButton>
          <ImeButton aria-label="语音"><Mic size={13} fill="#1f78c2" /></ImeButton>
          <ImeButton aria-label="键盘"><Keyboard size={14} /></ImeButton>
          <ImeButton aria-label="用户"><Icon name="person" size={12} /></ImeButton>
          <ImeButton aria-label="皮肤"><Icon name="shirt" size={12} /></ImeButton>
          <ImeButton aria-label="工具"><Wrench size={13} fill="#1f78c2" /></ImeButton>
        </Ime>
      </Work>

      <Command>
        <CommandGrip />
        <CommandBody>
          <History>
            <div>指定椭圆的中心点:</div>
            <div>指定轴的端点: 50</div>
          </History>
          <Prompt>指定另一条半轴长度或 [旋转(R)]:<PromptInput /></Prompt>
        </CommandBody>
      </Command>

      <Status>
        <Coords>2010.9413, 2105.8421, 0.0000</Coords>
        {toggles.map(([n, on]) => <StatusButton key={n} $on={on} aria-label={n} aria-pressed={on}><Icon name={n} size={13} /></StatusButton>)}
        <Fill />
        <StatusRight>
          <StatusButton aria-label="模型"><Icon name="model" size={13} /></StatusButton>
          <StatusButton aria-label="快速查看"><Icon name="quick" size={13} /></StatusButton>
          <StatusGap />
          <StatusButton aria-label="平移"><Icon name="pan" size={13} /></StatusButton>
          <StatusButton aria-label="缩放"><Icon name="zoom" size={13} /></StatusButton>
          <StatusButton aria-label="控制盘"><Icon name="wheel" size={13} /></StatusButton>
        </StatusRight>
      </Status>

      <Taskbar>
        <Start><Icon name="winflag" size={16} />开始</Start>
        <QuickLaunch>
          {['guard', 'blocks', 'ie'].map((n) => <Launch key={n} aria-label={n}><Icon name={n} /></Launch>)}
          »
        </QuickLaunch>
        <Task><Icon name="cloudapp" size={13} /><span>高级编辑器_百<Dim>...</Dim></span></Task>
        <Task><Icon name="k" size={12} /><span>- 最真的梦 - <Dim>...</Dim></span></Task>
        <Task $on $small><Icon name="cad" size={13} /><span>AutoCAD 2010 -<Dim>...</Dim></span></Task>
        <Task><Icon name="meitu" size={12} /><span>美图秀秀</span></Task>
        <Task><Icon name="wps" size={12} /><span>文字文稿1 - WP<Dim>...</Dim></span></Task>
        <Task><Icon name="sogou" size={12} /><span>符号大全</span></Task>
        <LangBar><Icon name="sogou" size={12} /></LangBar>
        <Tray>
          <Icon name="traycloud" size={12} />
          <Icon name="k" size={11} />
          <Icon name="net" size={11} />
          <Icon name="speaker" size={11} />
          <Icon name="shield" size={12} />
          <Clock>13:46</Clock>
        </Tray>
      </Taskbar>

      <Torn width="284" height="86" viewBox="716 519 284 86">
        <path d="M718 542L721 536 733 530 746 526 764 524 782 523 800 522 818 522 830 520 848 519 868 520 890 519 915 520 940 519 970 520 1000 519V603L985 602 970 603 955 602 930 603 905 602 880 603 850 602 820 603 790 602 768 602 760 599 756 593 750 588 740 586 732 584H718z" fill="#fff" />
      </Torn>
    </Shell>
  );
}
